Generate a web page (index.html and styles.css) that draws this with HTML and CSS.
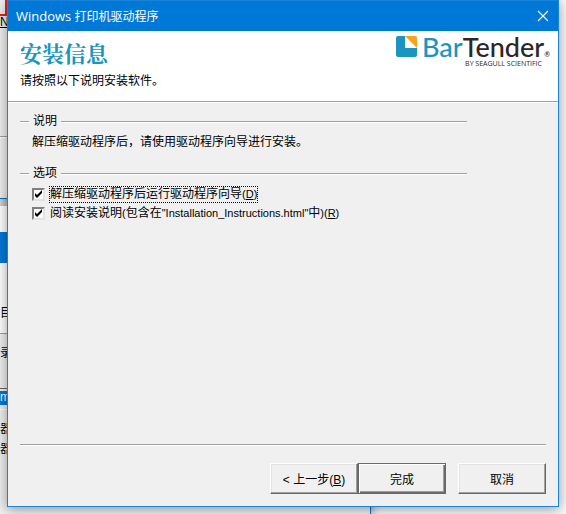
FILE: index.html
```html
<!DOCTYPE html>
<html lang="zh-CN">
<head>
    <meta charset="UTF-8">
    <meta name="viewport" content="width=device-width, initial-scale=1.0">
    <title>Windows 打印机驱动程序</title>
    <link rel="stylesheet" href="styles.css">
</head>
<body>
    <!-- Windows behind the dialog -->
    <div class="desktop" aria-hidden="true">
        <div class="back-window back-top">
            <div class="red-frame"></div>
            <span class="back-next">N)</span>
            <div class="back-rule"></div>
        </div>
        <div class="back-window back-bottom">
            <div class="back-title"></div>
            <div class="back-banner">目</div>
            <div class="back-label">录</div>
            <div class="back-selected">m</div>
            <div class="back-text">器.<br>器.</div>
        </div>
    </div>

    <form class="dialog">
        <!-- Title bar -->
        <header class="title-bar">
            <h1 class="window-title"><span class="window-app">Windows</span> 打印机驱动程序</h1>
            <button type="button" class="close-btn" aria-label="关闭">
                <svg width="12" height="12" viewBox="0 0 12 12"><path d="M1 1l10 10M11 1L1 11" fill="none" stroke="#fff" stroke-width="1.1"/></svg>
            </button>
        </header>

        <!-- Banner -->
        <div class="banner">
            <div>
                <h2 class="page-title">安装信息</h2>
                <p class="page-subtitle">请按照以下说明安装软件。</p>
            </div>
            <div class="logo">
                <svg class="logo-icon" width="21" height="21" viewBox="0 0 21 21">
                    <path d="M2 0h7v12h12v7a2 2 0 0 1-2 2H2a2 2 0 0 1-2-2V2a2 2 0 0 1 2-2z" fill="#1b95bf"/>
                    <path d="M9 0h10a2 2 0 0 1 2 2v10z" fill="#fba31c"/>
                </svg>
                <div class="logo-text">
                    <div class="logo-name"><span class="logo-bar">Bar</span>Tender<span class="logo-mark">®</span></div>
                    <div class="logo-tagline">BY SEAGULL SCIENTIFIC</div>
                </div>
            </div>
        </div>

        <!-- Main Content -->
        <main class="content">
            <fieldset class="group">
                <legend>说明</legend>
                <p class="group-text">解压缩驱动程序后，请使用驱动程序向导进行安装。</p>
            </fieldset>

            <fieldset class="group">
                <legend>选项</legend>
                <div class="option">
                    <input type="checkbox" id="runWizard" checked>
                    <label for="runWizard" class="focused">解压缩驱动程序后运行驱动程序向导<span class="latin">(<u>D</u>)</span></label>
                </div>
                <div class="option">
                    <input type="checkbox" id="readInstructions" checked>
                    <label for="readInstructions">阅读安装说明<span class="latin">(</span>包含在<span class="latin">"Installation_Instructions.html"</span>中<span class="latin">)(<u>R</u>)</span></label>
                </div>
            </fieldset>
        </main>

        <!-- Buttons -->
        <footer class="footer">
            <button type="button" class="btn">&lt; 上一步(<u>B</u>)</button>
            <button type="submit" class="btn btn-default">完成</button>
            <button type="button" class="btn btn-cancel">取消</button>
        </footer>
    </form>
</body>
</html>
```
FILE: styles.css
```css
* {
    margin: 0;
    padding: 0;
    box-sizing: border-box;
}

body {
    height: 100vh;
    padding: 0 7px 7px;
    overflow: hidden;
    background: #f8f8f8;
    color: #000;
    font-family: "Liberation Sans", "Noto Sans CJK SC", sans-serif;
    font-size: 12px;
    line-height: 18px;
}

/* Windows behind the dialog */
.desktop {
    position: absolute;
    inset: 0;
    overflow: hidden;
}

.back-window {
    position: absolute;
    left: 0;
    overflow: hidden;
    background: #efefef;
}

.back-top {
    top: 0;
    width: 60px;
    height: 199px;
    border-bottom: 1px solid #0078d7;
    box-shadow: 0 2px 8px rgba(0, 0, 0, 0.4);
}

.red-frame {
    width: 7px;
    height: 16px;
    border: solid #f02010;
    border-width: 0 2px 2px 0;
}

.back-next {
    display: block;
    width: 8px;
    height: 12px;
    border-bottom: 1px solid #000;
    line-height: 12px;
}

.back-rule {
    margin-top: 108px;
    border-top: 1px solid #a0a0a0;
    border-bottom: 1px solid #fff;
}

.back-bottom {
    top: 206px;
    bottom: 0;
    width: 371px;
    border-right: 1px solid #0078d7;
    box-shadow: 0 0 10px rgba(0, 0, 0, 0.5);
}

.back-title {
    height: 57px;
    background: #0078d7;
    border-top: 26px solid #fff;
}

.back-banner {
    height: 71px;
    padding-top: 41px;
    background: #fff;
    border-bottom: 1px solid #a0a0a0;
}

.back-label {
    height: 55px;
    padding-top: 10px;
    border-bottom: 1px solid #696969;
}

.back-selected {
    height: 14px;
    margin-top: 2px;
    background: #0078d7;
    color: #fff;
    line-height: 12px;
}

.back-text {
    margin-top: 4px;
    padding-top: 9px;
    border-top: 1px solid #fff;
    line-height: 20px;
}

/* Dialog */
.dialog {
    position: relative;
    display: flex;
    flex-direction: column;
    height: 100%;
    background: #f0f0f0;
    border: 1px solid #1883d7;
    box-shadow: 0 2px 12px rgba(0, 0, 0, 0.4);
}

.title-bar {
    display: flex;
    justify-content: space-between;
    align-items: center;
    height: 30px;
    padding: 0 9px 0 8px;
    background: #0078d7;
    color: #fff;
}

.window-title {
    font-family: "Open Sans", "Noto Sans CJK SC", sans-serif;
    font-size: 12px;
    font-weight: 400;
}

.window-app {
    font-size: 13px;
}

.close-btn {
    display: flex;
    background: none;
    border: none;
}

/* Banner */
.banner {
    display: flex;
    justify-content: space-between;
    height: 71px;
    padding: 4px 8px 0 12px;
    background: #fff;
    border-bottom: 1px solid #a0a0a0;
}

.page-title {
    color: #1b95bf;
    font-family: "Noto Serif CJK SC", "Noto Sans CJK SC", serif;
    font-size: 22px;
    font-weight: 700;
    line-height: 36px;
}

.page-subtitle {
    line-height: 20px;
}

.logo {
    display: flex;
    gap: 5px;
}

.logo-icon {
    margin-top: 1px;
}

.logo-name {
    display: flex;
    color: #2b2628;
    font-family: Lato, "Open Sans", sans-serif;
    font-size: 27px;
    font-weight: 500;
    line-height: 24px;
}

.logo-bar {
    color: #1b95bf;
}

.logo-mark {
    align-self: flex-end;
    font-size: 7px;
    line-height: 10px;
}

.logo-tagline {
    padding-right: 8px;
    color: #2b2628;
    font-family: "Open Sans", sans-serif;
    font-size: 7px;
    line-height: 10px;
    text-align: right;
}

/* Main Content */
.content {
    flex: 1;
    padding: 8px 12px 0;
    border-top: 1px solid #fff;
}

.group {
    width: 85%;
    margin-bottom: 12px;
    padding: 2px 0 0 9px;
    border: none;
    border-top: 1px solid #a0a0a0;
    box-shadow: inset 0 1px #fff;
}

.group legend {
    padding: 0 4px;
    background: #f0f0f0;
    line-height: 20px;
}

.group-text {
    padding-left: 3px;
}

.option {
    display: flex;
    align-items: center;
    gap: 4px;
    height: 19px;
    padding-left: 3px;
    white-space: nowrap;
}

.option label {
    border: 1px dotted transparent;
    line-height: 15px;
}

.option .focused {
    border-color: #000;
}

.latin {
    font-size: 11px;
}

.option input {
    appearance: none;
    width: 13px;
    height: 13px;
    background: #fff;
    border: 2px solid;
    border-color: #808080 #e3e3e3 #e3e3e3 #808080;
}

.option input:checked::after {
    content: "";
    display: block;
    width: 9px;
    height: 9px;
    background: #000;
    clip-path: polygon(1px 3px, 3px 5px, 8px 0, 8px 3px, 3px 8px, 1px 6px);
}

/* Buttons */
.footer {
    display: flex;
    justify-content: flex-end;
    margin: 0 12px;
    padding: 18px 0 12px;
    border-top: 1px solid #a0a0a0;
    box-shadow: inset 0 1px #fff;
}

.btn {
    width: 88px;
    height: 31px;
    background: #f0f0f0;
    border: 1px solid;
    border-color: #fff #696969 #696969 #fff;
    box-shadow: inset -1px -1px #a0a0a0, inset 1px 1px #e3e3e3;
    color: #000;
    font-family: inherit;
    font-size: 12px;
}

.btn-default {
    border-color: #696969;
    box-shadow: inset 1px 1px #fff, inset -1px -1px #696969, inset -2px -2px #a0a0a0;
}

.btn-cancel {
    margin-left: 12px;
}
```
